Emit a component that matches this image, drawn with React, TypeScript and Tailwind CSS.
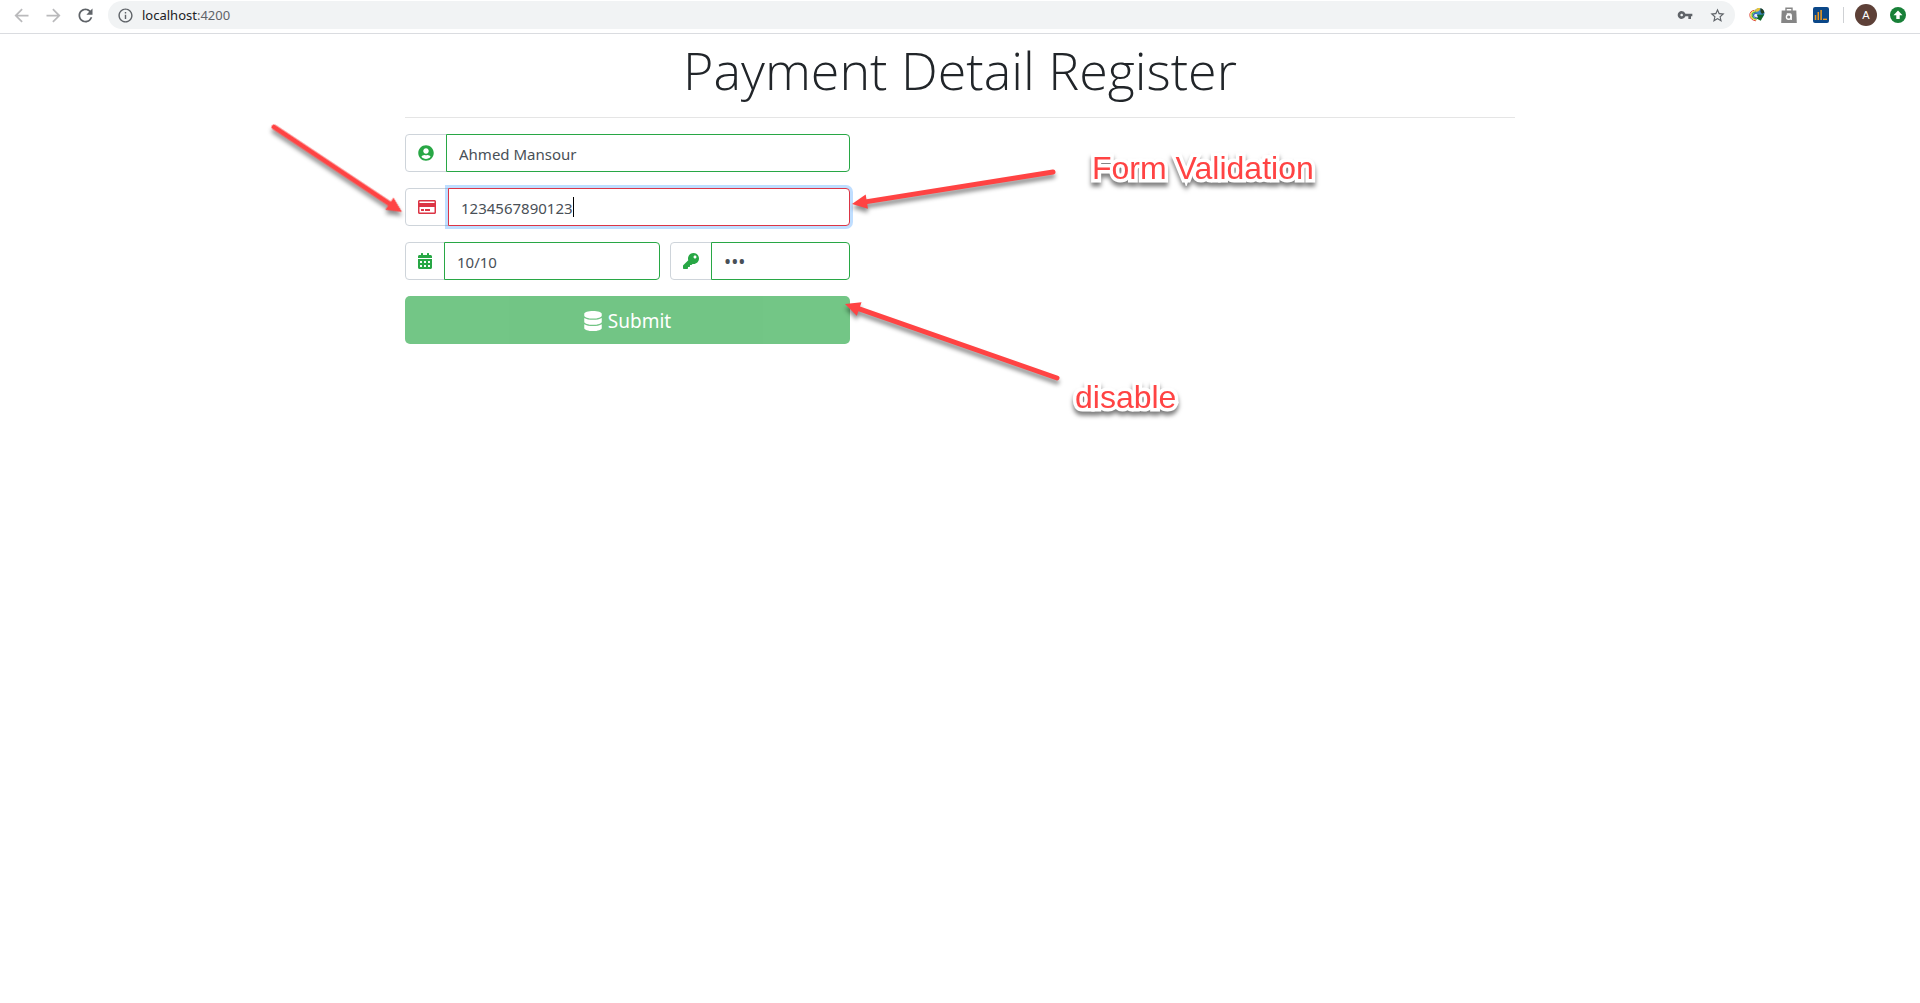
import type { ComponentType, InputHTMLAttributes, ReactNode } from 'react';
import { FaCalendarAlt, FaDatabase, FaKey, FaRegCreditCard, FaUserCircle } from 'react-icons/fa';
import {
  MdArrowBack,
  MdArrowForward,
  MdOutlineInfo,
  MdRefresh,
  MdStarOutline,
  MdVpnKey,
} from 'react-icons/md';

function IdmIcon() {
  return (
    <svg viewBox="0 0 16 16" className="size-4" aria-hidden="true">
      <circle cx="10.200" cy="6.200" r="5.200" fill="#3a86c8" />
      <path d="M6 3.200C7.500 1.200 10 .8 11.500 1.300L10 4 7.500 5z" fill="#e6c53c" />
      <path d="M11.500 1.300c2 .5 3.700 2.300 3.900 4.500L13 7l-1.500-2z" fill="#23401f" />
      <path d="M5.500 3.300C2.500 3.300.6 5.800.8 8.500c.3 3 2.700 5 6.200 5.300" fill="none" stroke="#dd4a3c" strokeWidth="1" />
      <path d="M6.500 4.300C3.500 4 1.800 6 2 8.500c.3 2.500 2.300 4 5.500 4.400" fill="none" stroke="#f0d53a" strokeWidth="1.200" />
      <path d="M7 5.400C4.500 5 3 6.500 3.200 8.500c.2 2 2 3.200 4.800 3.500" fill="none" stroke="#46ad45" strokeWidth="1.200" />
      <path d="M7.500 6.500C5.500 6 4.300 7 4.500 8.500c.2 1.600 1.700 2.300 4 2.400" fill="none" stroke="#3b5fc8" strokeWidth="1.200" />
      <path d="M5.500 8.500c0-1.500 1.500-1.800 3-1l2 2.700H8c-1.500 0-2.500-.5-2.500-1.700z" fill="#e4f0fa" />
      <path d="M7.800 7.500l3.700.3 3.700-.6-3.400 6.600-4.300-2.300 1.500-1z" fill="#12672a" />
    </svg>
  );
}

function BagIcon() {
  return (
    <svg viewBox="0 0 16 16" className="size-4" aria-hidden="true">
      <path d="M5 4V1.200h6V4" fill="none" stroke="#858585" strokeWidth="1.400" />
      <path d="M.7 3.500h14.600l.5 12.500H.2z" fill="#858585" />
      <circle cx="7.700" cy="10" r="2.300" fill="none" stroke="#fff" strokeWidth="1.400" />
      <path d="M5.800 7h3.400q1 0 1 1v5" fill="none" stroke="#fff" strokeWidth="1.300" />
    </svg>
  );
}

function ChartIcon() {
  return (
    <svg viewBox="0 0 16 16" className="size-4" aria-hidden="true">
      <rect width="16" height="16" rx="2" fill="#0b4788" />
      <path d="M2.500 8v5M5.300 5v8M8.100 3v10" stroke="#f29b1d" strokeWidth="1.500" />
      <path d="M10 12.300h4" stroke="#f29b1d" strokeWidth="1.400" />
    </svg>
  );
}

function UpdateIcon() {
  return (
    <svg viewBox="0 0 16 16" className="size-4" aria-hidden="true">
      <circle cx="8" cy="8" r="8" fill="#188038" />
      <path d="M8 3.500l4.500 4.700H9.700V12H6.300V8.200H3.500z" fill="#fff" />
    </svg>
  );
}

function BrowserBar() {
  return (
    <header className="flex h-[34px] items-start border-b border-[#dadce0] bg-white pt-px pr-3.5 pl-[11px]">
      <nav className="flex h-7 items-center gap-[11px]" aria-label="Browser">
        <button type="button" aria-label="Back" className="text-[#bababc]"><MdArrowBack size={21} /></button>
        <button type="button" aria-label="Forward" className="text-[#bababc]"><MdArrowForward size={21} /></button>
        <button type="button" aria-label="Reload" className="text-[#5f6368]"><MdRefresh size={21} /></button>
      </nav>
      <div className="ml-3 flex h-7 flex-1 items-center rounded-full bg-[#f1f3f4] px-[9px] text-[#5f6368]">
        <MdOutlineInfo size={17} />
        <a href="http://localhost:4200" className="ml-2 flex-1 font-['Noto_Sans',sans-serif] text-[13px] leading-7">
          <span className="text-[#202124]">localhost</span>:4200
        </a>
        <div className="flex items-center gap-4">
          <button type="button" aria-label="Saved passwords"><MdVpnKey size={16} /></button>
          <button type="button" aria-label="Bookmark"><MdStarOutline size={17} /></button>
        </div>
      </div>
      <div className="ml-3.5 flex h-7 items-center gap-4">
        <button type="button" aria-label="Download manager"><IdmIcon /></button>
        <button type="button" aria-label="Shopping assistant"><BagIcon /></button>
        <button type="button" aria-label="Statistics"><ChartIcon /></button>
      </div>
      <div className="ml-3.5 flex h-7 items-center">
        <div className="h-4 w-px bg-[#cfd1d4]" />
        <button type="button" className="ml-[11px] size-[22px] rounded-full bg-[#5d4037] text-center font-['Liberation_Sans',sans-serif] text-[11px] leading-[22px] text-white">A</button>
        <button type="button" aria-label="Update" className="ml-[13px]"><UpdateIcon /></button>
      </div>
    </header>
  );
}

type FieldProps = InputHTMLAttributes<HTMLInputElement> & {
  label: string;
  icon: ComponentType<{ className?: string }>;
  iconClass: string;
  inputClass: string;
  children?: ReactNode;
};

function Field({ label, icon: Icon, iconClass, inputClass, children, ...input }: FieldProps) {
  return (
    <div className="flex h-[38px]">
      <label htmlFor={input.id} className="flex items-center rounded-l border border-[#ced4da] bg-white px-3">
        <Icon className={iconClass} />
      </label>
      <div className="relative -ml-px min-w-0 flex-1">
        <input
          {...input}
          aria-label={label}
          className={`h-full w-full rounded-r border bg-white px-3 pt-0.5 text-[#495057] caret-transparent outline-none ${inputClass}`}
        />
        {children}
      </div>
    </div>
  );
}

function PaymentForm() {
  return (
    <form className="flex w-full max-w-[445px] flex-col gap-4" onSubmit={(e) => e.preventDefault()}>
      <Field id="owner" label="Card owner" icon={FaUserCircle} iconClass="size-4 text-[#28a745]" inputClass="border-[#28a745] text-[15px]" defaultValue="Ahmed Mansour" />
      <Field id="number" label="Card number" icon={FaRegCreditCard} iconClass="h-4 w-[18px] text-[#dc3545]" inputClass="border-[#dc3545] text-[15px] shadow-[0_0_0_3px_rgba(0,123,255,0.25)]" defaultValue="1234567890123">
        <span className="absolute top-[9px] left-[125px] h-5 w-px bg-black" />
      </Field>
      <div className="grid grid-cols-[255fr_180fr] gap-2.5">
        <Field id="expires" label="Expiration date" icon={FaCalendarAlt} iconClass="h-4 w-3.5 text-[#28a745]" inputClass="border-[#28a745] text-[15px]" defaultValue="10/10" />
        <Field id="cvv" label="CVV" type="password" icon={FaKey} iconClass="size-4 text-[#28a745]" inputClass="border-[#28a745] text-[19px]" defaultValue="123" />
      </div>
      <button type="submit" disabled className="flex h-12 items-center justify-center gap-1.5 rounded-[5px] bg-[#28a745] pt-0.5 text-[19px] text-white opacity-65">
        <FaDatabase className="h-5 w-[18px]" />
        Submit
      </button>
    </form>
  );
}

function Arrow({ x1, y1, x2, y2 }: { x1: number; y1: number; x2: number; y2: number }) {
  const length = Math.hypot(x2 - x1, y2 - y1);
  const angle = (Math.atan2(y2 - y1, x2 - x1) * 180) / Math.PI;
  return (
    <g transform={`translate(${x1} ${y1}) rotate(${angle})`} stroke="#ff4343" fill="#ff4343">
      <path d={`M0 0H${length - 12}`} strokeWidth="5" strokeLinecap="round" />
      <path d={`M${length} 0l-15 -7.200v14.400z`} stroke="none" />
    </g>
  );
}

function Note({ className, children }: { className: string; children: ReactNode }) {
  return (
    <span
      className={`absolute font-['Liberation_Sans',sans-serif] text-[32px] leading-9 whitespace-nowrap text-[#ff4343] [paint-order:stroke_fill] [-webkit-text-stroke:7px_white] [filter:drop-shadow(0_4px_2px_rgba(0,0,0,0.5))] ${className}`}
    >
      {children}
    </span>
  );
}

export default function App() {
  return (
    <div className="min-h-screen bg-white font-['Noto_Sans',sans-serif] text-[#212529]">
      <BrowserBar />
      <main className="relative mx-auto max-w-[1110px]">
        <h1 className="border-b border-[#e5e5e5] pt-0.5 pb-3.5 text-center font-['Open_Sans',sans-serif] text-[52px] leading-[67px] font-light">Payment Detail Register</h1>
        <div className="pt-4">
          <PaymentForm />
        </div>
        <svg className="pointer-events-none absolute top-0 left-0 h-96 w-full overflow-visible [filter:drop-shadow(0_4px_2px_rgba(0,0,0,0.45))]" aria-hidden="true">
          <Arrow x1={-131} y1={93} x2={-3} y2={178} />
          <Arrow x1={648} y1={138} x2={447} y2={170} />
          <Arrow x1={652} y1={344} x2={440} y2={270} />
        </svg>
        <Note className="top-[116px] left-[687px]">Form Validation</Note>
        <Note className="top-[345px] left-[670px]">disable</Note>
      </main>
    </div>
  );
}
